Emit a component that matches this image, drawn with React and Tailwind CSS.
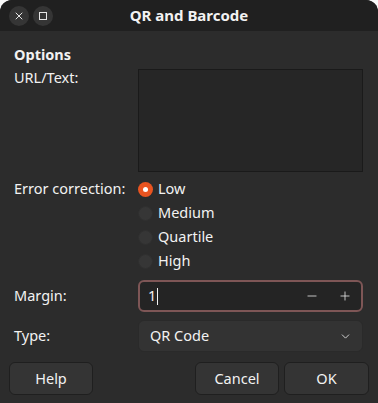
import { ChevronDown, Minus, Plus, X } from 'lucide-react';

const font = { fontFamily: '"Noto Sans", "Open Sans", sans-serif' };

function Radio({ label, checked }) {
  return (
    <div className="flex items-center h-6 gap-[5px]">
      {checked ? (
        <span className="w-[15px] h-[15px] rounded-full bg-[#e95420] flex items-center justify-center">
          <span className="w-[5px] h-[5px] rounded-full bg-white" />
        </span>
      ) : (
        <span className="w-[15px] h-[15px] rounded-full bg-[#363636] border border-[#2f2f2f]" />
      )}
      <span className="text-[#f2f2f2]">{label}</span>
    </div>
  );
}

function Button({ children, className = '' }) {
  return (
    <button className={`h-[33px] rounded-[6px] bg-[#343434] border border-[#1f1f1f] text-[#f2f2f2] ${className}`}>
      {children}
    </button>
  );
}

export default function App() {
  return (
    <div className="w-[378px] h-[403px] bg-[#fafafa]" style={font}>
      <div className="w-full h-full flex flex-col rounded-t-[12px] overflow-hidden bg-[#2c2c2c] text-[14.5px] text-[#f2f2f2]">
        {/* Header bar */}
        <div className="relative h-[31px] bg-[#202020] flex items-center justify-center shrink-0">
          <div className="absolute left-[9px] top-[6px] flex gap-[4px]">
            <span className="w-5 h-5 rounded-full bg-[#353535] flex items-center justify-center">
              <X size={12} strokeWidth={2} className="text-[#e6e6e6]" />
            </span>
            <span className="w-5 h-5 rounded-full bg-[#353535] flex items-center justify-center">
              <span className="w-[8px] h-[8px] border-[1.5px] border-[#e6e6e6]" />
            </span>
          </div>
          <span className="font-bold text-[15px]">QR and Barcode</span>
        </div>

        {/* Body */}
        <div className="flex flex-col pl-[14px] pr-[15px] pt-[13px]">
          <div className="font-bold h-[20px] leading-[20px]">Options</div>

          <div className="flex mt-[5px]">
            <div className="w-[124px] leading-[20px] -mt-[2px]">URL/Text:</div>
            <div className="flex-1 h-[103px] bg-[#262626] border border-[#1a1a1a]" />
          </div>

          <div className="flex mt-[5px]">
            <div className="w-[124px] h-6 flex items-center">Error correction:</div>
            <div className="flex flex-col">
              <Radio label="Low" checked />
              <Radio label="Medium" />
              <Radio label="Quartile" />
              <Radio label="High" />
            </div>
          </div>

          <div className="flex items-center mt-[7px]">
            <div className="w-[124px]">Margin:</div>
            <div className="flex-1 h-[32px] rounded-[6px] border-2 border-[#7e5656] bg-[#242424] flex items-center">
              <span className="flex-1 pl-[8px] flex items-center">
                1<span className="w-px h-[17px] bg-[#f2f2f2] ml-[1px]" />
              </span>
              <span className="w-[33px] h-full flex items-center justify-center">
                <Minus size={14} strokeWidth={1.4} className="text-[#e6e6e6]" />
              </span>
              <span className="w-[33px] h-full flex items-center justify-center">
                <Plus size={14} strokeWidth={1.4} className="text-[#e6e6e6]" />
              </span>
            </div>
          </div>

          <div className="flex items-center mt-[8px]">
            <div className="w-[124px]">Type:</div>
            <div className="flex-1 h-[32px] rounded-[6px] bg-[#333333] border border-[#2a2a2a] flex items-center justify-between pl-[11px] pr-[10px]">
              <span>QR Code</span>
              <ChevronDown size={13} strokeWidth={1.6} className="text-[#e6e6e6]" />
            </div>
          </div>
        </div>

        <div className="flex items-center px-[9px] mt-[10px]">
          <Button className="w-[84px]">Help</Button>
          <div className="flex-1" />
          <div className="flex gap-[5px]">
            <Button className="w-[84px]">Cancel</Button>
            <Button className="w-[85px]">OK</Button>
          </div>
        </div>
      </div>
    </div>
  );
}
